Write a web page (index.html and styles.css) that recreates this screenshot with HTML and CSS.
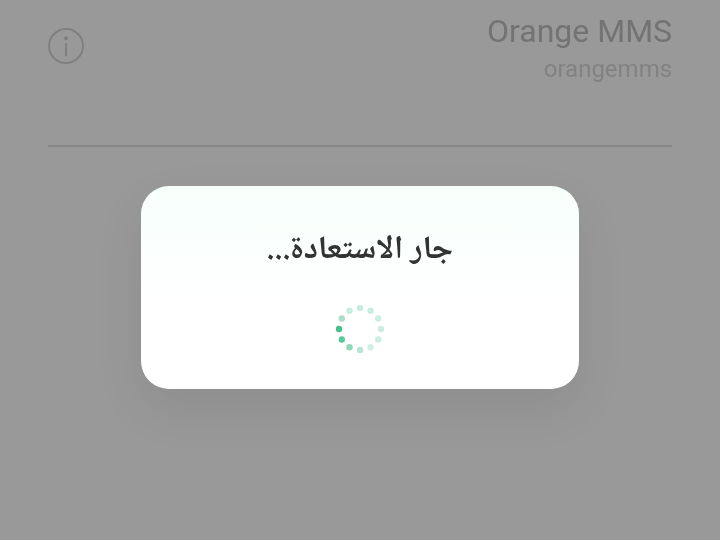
FILE: index.html
```html
<!DOCTYPE html>
<html lang="ar">
<head>
<meta charset="utf-8">
<title>Orange MMS</title>
<link rel="stylesheet" href="styles.css">
</head>
<body>
<main class="page">
  <header class="account">
    <svg class="info" viewBox="0 0 36 36" aria-hidden="true">
      <circle cx="18" cy="18" r="17" fill="none" stroke="#808080" stroke-width="2"/>
      <circle cx="18" cy="10.2" r="2" fill="#808080"/>
      <rect x="16.9" y="15" width="2.2" height="13.5" rx="1" fill="#808080"/>
    </svg>
    <div class="names">
      <div class="name">Orange MMS</div>
      <div class="id">orangemms</div>
    </div>
  </header>
</main>
<div class="overlay">
  <div class="dialog">
    <div class="title" dir="rtl">جار الاستعادة...</div>
    <svg class="spinner" viewBox="0 0 50 50" aria-hidden="true">
      <circle cx="25" cy="4" r="3.2" fill="#c8ecdd"/>
      <circle cx="35.5" cy="6.8" r="3.2" fill="#c8ecdd"/>
      <circle cx="43.2" cy="14.5" r="3.2" fill="#cceee0"/>
      <circle cx="46" cy="25" r="3.2" fill="#cceee0"/>
      <circle cx="43.2" cy="35.5" r="3.2" fill="#cceee0"/>
      <circle cx="35.5" cy="43.2" r="3.2" fill="#d0f0e4"/>
      <circle cx="25" cy="46" r="3.2" fill="#b9e6d4"/>
      <circle cx="14.5" cy="43.2" r="3.2" fill="#90d8ba"/>
      <circle cx="6.8" cy="35.5" r="3.2" fill="#5cc99d"/>
      <circle cx="4" cy="25" r="3.2" fill="#46c08d"/>
      <circle cx="6.8" cy="14.5" r="3.2" fill="#a8e0c8"/>
      <circle cx="14.5" cy="6.8" r="3.2" fill="#c8ecdd"/>
    </svg>
  </div>
</div>
</body>
</html>
```
FILE: styles.css
```css
html, body {
  margin: 0;
  height: 100%;
  background: #999999;
}
body {
  font-family: Roboto, sans-serif;
  overflow: hidden;
}
.page {
  padding: 0 48px;
}
.account {
  display: flex;
  justify-content: space-between;
  align-items: flex-start;
  box-sizing: border-box;
  border-bottom: 2px solid #868686;
  padding-top: 11px;
  height: 147px;
}
.info {
  width: 36px;
  height: 36px;
  margin-top: 17px;
}
.names {
  text-align: right;
  will-change: transform;
}
.name {
  font-size: 32px;
  line-height: 40px;
  color: #737373;
}
.id {
  font-size: 24px;
  line-height: 36px;
  color: #828282;
}
.overlay {
  position: fixed;
  inset: 0;
  display: flex;
  justify-content: center;
  align-items: flex-start;
  padding-top: 186px;
}
.dialog {
  width: 438px;
  height: 203px;
  box-sizing: border-box;
  border-radius: 28px;
  background: linear-gradient(#f7fffb 0, #ffffff 60%);
  box-shadow: 0 20px 50px rgba(0, 0, 0, 0.08);
  display: flex;
  flex-direction: column;
  align-items: center;
  padding-top: 43px;
}
.title {
  font-family: "Noto Naskh Arabic", "Noto Sans Arabic", "Droid Arabic Naskh", "DejaVu Sans", sans-serif;
  font-size: 32.5px;
  font-weight: 700;
  line-height: 44px;
  color: #333333;
  will-change: transform;
}
.spinner {
  width: 50px;
  height: 50px;
  margin-top: 30.6px;
}
```
